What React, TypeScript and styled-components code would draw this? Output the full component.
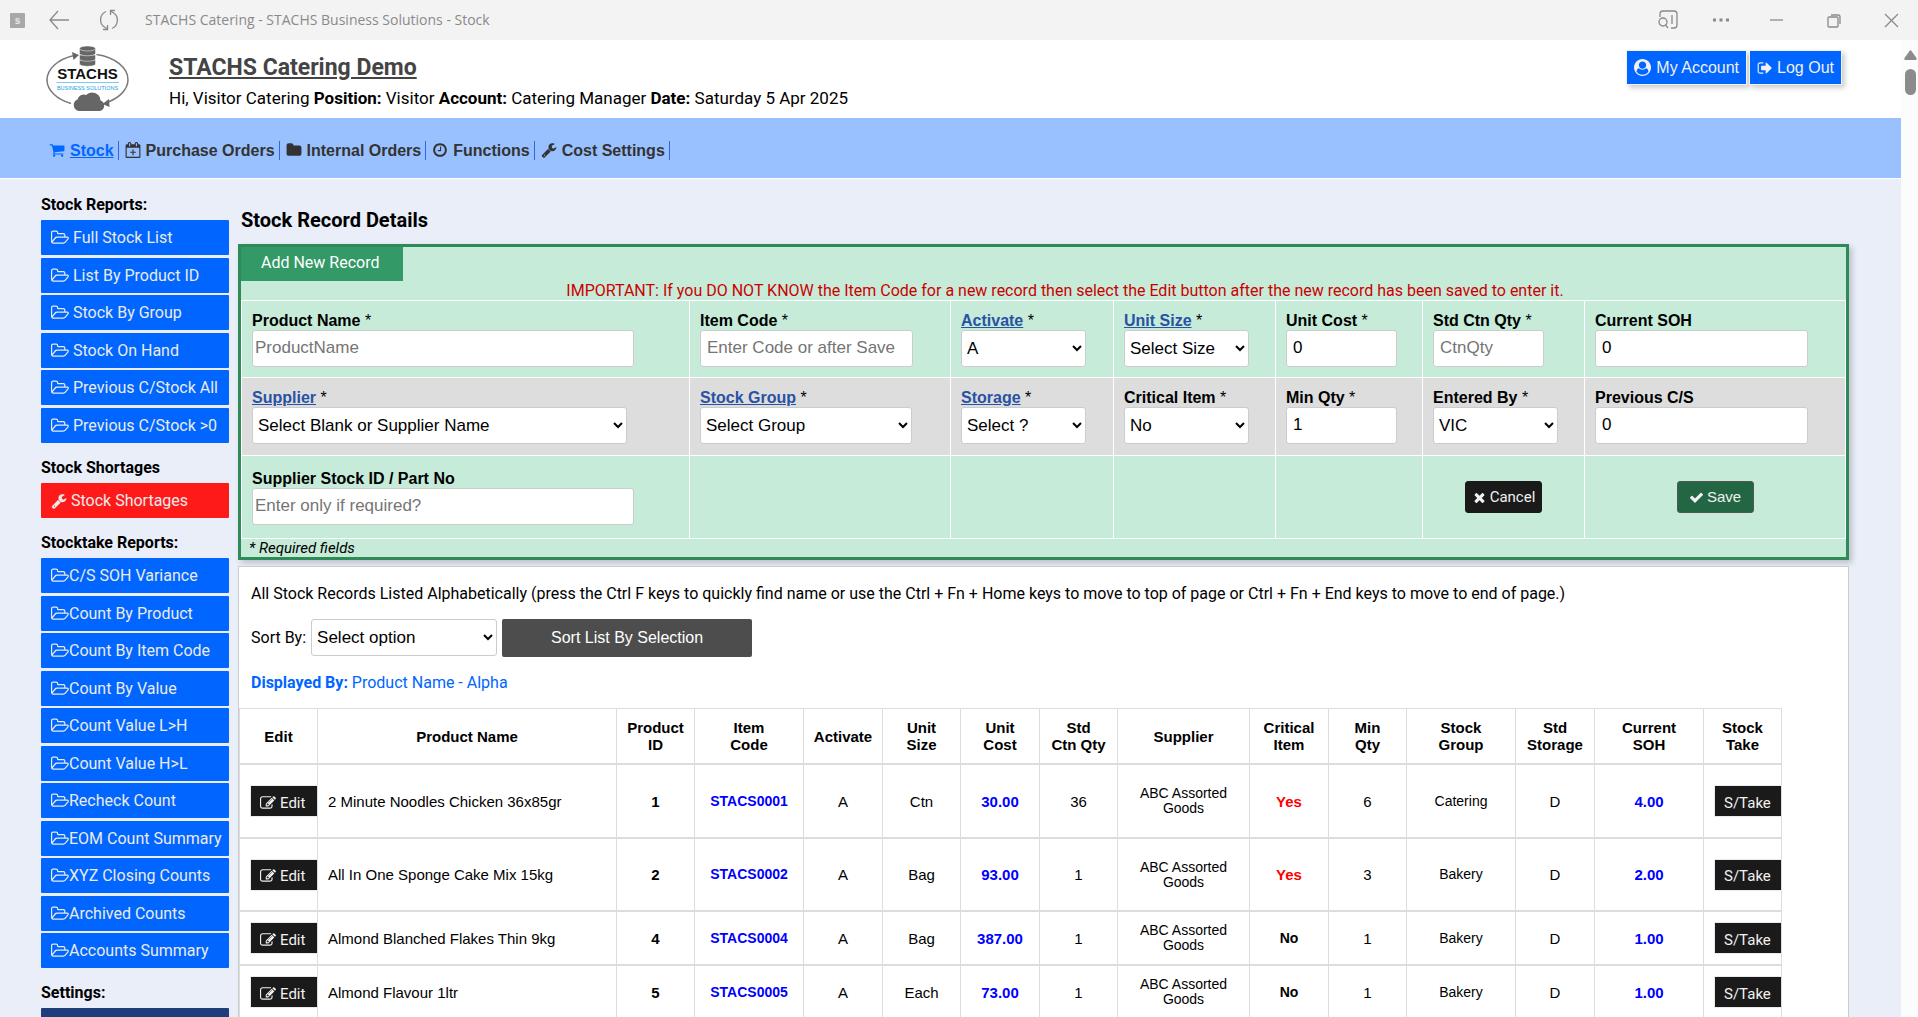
import React from "react";
import styled, { createGlobalStyle } from "styled-components";

const roboto = `Roboto, "Noto Sans", sans-serif`;
const arial = `"Liberation Sans", Arial, sans-serif`;

const GlobalStyle = createGlobalStyle`
  *, *::before, *::after { box-sizing: border-box; }
  body { margin: 0; background: #eaeef9; color: #000; font: 400 16px/24px ${roboto}; }
  h1, h2, h3, p, ul { margin: 0; padding: 0; }
  ul { list-style: none; }
  button, input, select { font-family: inherit; margin: 0; }
`;

/* ---------- icons ---------- */

const glyphs = {
  cart: { w: 1792, d: "M704 1536q0 52-38 90t-90 38-90-38-38-90 38-90 90-38 90 38 38 90zm896 0q0 52-38 90t-90 38-90-38-38-90 38-90 90-38 90 38 38 90zm128-1088v512q0 24-16.5 42.5t-40.5 21.5l-1044 122q13 60 13 70 0 16-24 64h920q26 0 45 19t19 45-19 45-45 19h-1024q-26 0-45-19t-19-45q0-11 8-31.5t16-36 21.5-40 15.5-29.5l-177-823h-204q-26 0-45-19t-19-45 19-45 45-19h256q16 0 28.5 6.5t19.5 15.5 13 24.5 8 26 5.5 29.5 4.5 26h1201q26 0 45 19t19 45z" },
  calendar: { w: 1792, d: "M192 1664h1408v-1024h-1408v1024zm384-1216v-288q0-14-9-23t-23-9h-64q-14 0-23 9t-9 23v288q0 14 9 23t23 9h64q14 0 23-9t9-23zm768 0v-288q0-14-9-23t-23-9h-64q-14 0-23 9t-9 23v288q0 14 9 23t23 9h64q14 0 23-9t9-23zm384-64v1280q0 52-38 90t-90 38h-1408q-52 0-90-38t-38-90v-1280q0-52 38-90t90-38h128v-96q0-66 47-113t113-47h64q66 0 113 47t47 113v96h384v-96q0-66 47-113t113-47h64q66 0 113 47t47 113v96h128q52 0 90 38t38 90zM832 832h128v256h256v128h-256v256h-128v-256h-256v-128h256z" },
  folder: { w: 1792, d: "M1728 608v704q0 92-66 158t-158 66h-1216q-92 0-158-66t-66-158v-960q0-92 66-158t158-66h320q92 0 158 66t66 158v32h672q92 0 158 66t66 158z" },
  folderOpen: { w: 1920, d: "M1783 952q0-31-31-31h-1088q-40 0-85.500 21.500t-71.500 52.500l-294 363q-18 24-18 40 0 31 31 31h1088q40 0 86-22t71-53l294-363q18-22 18-39zm-1143-159h768v-160q0-40-28-68t-68-28h-576q-40 0-68-28t-28-68v-64q0-40-28-68t-68-28h-320q-40 0-68 28t-28 68v853l256-315q44-53 116-87.500t140-34.500zm1269 159q0 62-46 120l-295 363q-43 53-116 87.500t-140 34.500h-1088q-92 0-158-66t-66-158v-960q0-92 66-158t158-66h320q92 0 158 66t66 158v32h544q92 0 158 66t66 158v160h192q54 0 99 24.500t67 70.500q15 32 15 68z" },
  clock: { w: 1792, d: "M1024 544v448q0 14-9 23t-23 9h-320q-14 0-23-9t-9-23v-64q0-14 9-23t23-9h224v-352q0-14 9-23t23-9h64q14 0 23 9t9 23zm416 352q0-148-73-273t-198-198-273-73-273 73-198 198-73 273 73 273 198 198 273 73 273-73 198-198 73-273zm224 0q0 209-103 385.500t-279.500 279.500-385.500 103-385.500-103-279.500-279.500-103-385.500 103-385.500 279.500-279.500 385.500-103 385.500 103 279.500 279.500 103 385.500z" },
  wrench: { w: 1792, d: "M448 1472q0-26-19-45t-45-19-45 19-19 45 19 45 45 19 45-19 19-45zm644-420l-682 682q-37 37-90 37-52 0-91-37l-106-108q-38-36-38-90 0-53 38-91l681-681q39 98 114.500 173.500t173.500 114.500zm634-435q0 39-23 106-47 134-164.500 217.500t-258.500 83.500q-185 0-316.500-131.500t-131.500-316.500 131.500-316.500 316.500-131.500q58 0 121.500 16.500t107.500 46.500q16 11 16 28t-16 28l-293 169v224l193 107q5-3 79-48.500t135.500-81 70.500-35.500q15 0 23.500 10t8.500 25z" },
  user: { w: 1792, d: "M1523 1339q-22-155-87.500-257.500t-184.500-118.500q-67 74-159.500 115.500t-195.500 41.500-195.500-41.500-159.500-115.500q-119 16-184.500 118.500t-87.500 257.500q106 150 271 237.500t356 87.500 356-87.500 271-237.500zm-243-699q0-159-112.500-271.500t-271.500-112.500-271.500 112.500-112.500 271.500 112.500 271.500 271.500 112.500 271.500-112.500 112.500-271.500zm512 256q0 182-71 347.500t-190.500 286-285.500 191.500-349 71q-182 0-348-71t-286-191-191-286-71-348 71-348 191-286 286-191 348-71 348 71 286 191 191 286 71 348z" },
  signOut: { w: 1664, d: "M704 1440q0 4 1 20t.5 26.500-3 23.500-10 19.500-20.500 6.500h-320q-119 0-203.500-84.500t-84.500-203.500v-704q0-119 84.500-203.500t203.500-84.500h320q13 0 22.500 9.500t9.500 22.500q0 4 1 20t.5 26.500-3 23.500-10 19.500-20.500 6.500h-320q-66 0-113 47t-47 113v704q0 66 47 113t113 47h312l11.500 1 11.500 3 8 5.500 7 9 2 13.500zm928-544q0 26-19 45l-544 544q-19 19-45 19t-45-19-19-45v-288h-448q-26 0-45-19t-19-45v-384q0-26 19-45t45-19h448v-288q0-26 19-45t45-19 45 19l544 544q19 19 19 45z" },
  edit: { w: 1792, d: "M888 1184l116-116-152-152-116 116v56h96v96h56zm440-720q-16-16-33 1l-350 350q-17 17-1 33t33-1l350-350q17-17 1-33zm80 594v190q0 119-84.500 203.500t-203.500 84.500h-832q-119 0-203.500-84.500t-84.500-203.500v-832q0-119 84.500-203.500t203.500-84.500h832q63 0 117 25 15 7 18 23 3 17-9 29l-49 49q-14 14-32 8-23-6-45-6h-832q-66 0-113 47t-47 113v832q0 66 47 113t113 47h832q66 0 113-47t47-113v-126q0-13 9-22l64-64q15-15 35-7t20 29zm-96-738l288 288-672 672h-288v-288zm444 132l-92 92-288-288 92-92q28-28 68-28t68 28l152 152q28 28 28 68t-28 68z" },
  times: { w: 1792, d: "M1490 1322q0 40-28 68l-136 136q-28 28-68 28t-68-28l-294-294-294 294q-28 28-68 28t-68-28l-136-136q-28-28-28-68t28-68l294-294-294-294q-28-28-28-68t28-68l136-136q28-28 68-28t68 28l294 294 294-294q28-28 68-28t68 28l136 136q28 28 28 68t-28 68l-294 294 294 294q28 28 28 68z" },
  check: { w: 1792, d: "M1671 566q0 40-28 68l-724 724-136 136q-28 28-68 28t-68-28l-136-136-362-362q-28-28-28-68t28-68l136-136q28-28 68-28t68 28l294 295 656-657q28-28 68-28t68 28l136 136q28 28 28 68z" },
};

type GlyphName = keyof typeof glyphs;

const GlyphSvg = styled.svg`
  flex: none;
  display: block;
  fill: currentColor;
  overflow: visible;
`;

function Glyph({ name, size = 16 }: { name: GlyphName; size?: number }) {
  const g = glyphs[name];
  return (
    <GlyphSvg viewBox={`0 0 ${g.w} 1792`} height={size} width={Math.round((size * g.w) / 1792)} aria-hidden>
      <path d={g.d} />
    </GlyphSvg>
  );
}

/* ---------- window frame ---------- */

const Shell = styled.div`
  display: flex;
  flex-direction: column;
  height: 100vh;
  overflow: hidden;
`;

const TitleBar = styled.div`
  flex: none;
  display: flex;
  align-items: center;
  height: 40px;
  padding: 0 16px 0 10px;
  background: #f3f3f3;
  color: #8a8a8a;
`;

const Favicon = styled.span`
  width: 15px;
  height: 15px;
  margin-right: 23px;
  border-radius: 1px;
  background: #a8a8a8;
  color: #e8e8e8;
  font: 700 10px/15px ${arial};
  text-align: center;
`;

const FrameButton = styled.button<{ $after: number }>`
  display: flex;
  align-items: center;
  justify-content: center;
  width: 22px;
  height: 24px;
  margin-right: ${(p) => p.$after}px;
  padding: 0;
  border: 0;
  background: none;
  color: inherit;
  svg {
    fill: none;
    stroke: currentColor;
    stroke-width: 1.3;
    overflow: visible;
  }
`;

const WindowTitle = styled.span`
  flex: 1;
  font: 400 14px/20px "Open Sans", "Noto Sans", sans-serif;
`;

const Viewport = styled.div`
  flex: 1;
  display: flex;
  min-height: 0;
`;

const Page = styled.div`
  flex: 1;
  min-width: 0;
  overflow: hidden;
  background: #eaeef9;
`;

const ScrollTrack = styled.div`
  flex: none;
  display: flex;
  flex-direction: column;
  align-items: center;
  width: 17px;
  padding: 10px 0 0 2px;
  background: #fcfcfc;
`;

const ScrollArrow = styled.svg`
  width: 13px;
  height: 10px;
  fill: #8b8b8b;
`;

const ScrollThumb = styled.div`
  width: 11px;
  height: 26px;
  margin-top: 9px;
  border-radius: 6px;
  background: #8b8b8b;
`;

/* ---------- page header and menu ---------- */

const Header = styled.header`
  display: flex;
  height: 78px;
  padding: 6px 59px 0 46px;
  background: #fff;
`;

const LogoSvg = styled.svg`
  flex: none;
  width: 83px;
  height: 66px;
  margin-right: 40px;
`;

const Greeting = styled.div`
  flex: 1;
  padding-top: 8px;
  font-size: 17px;
  line-height: 24px;
`;

const SiteTitle = styled.h1`
  margin-bottom: 4px;
  color: #444;
  font-size: 23px;
  font-weight: 700;
  line-height: 28px;
  text-decoration: underline;
`;

const AccountActions = styled.div`
  display: flex;
  align-items: flex-start;
  gap: 2px;
  padding-top: 4px;
`;

const AccountLink = styled.a`
  display: flex;
  align-items: center;
  gap: 5px;
  padding: 6px 7px;
  border: 1px solid #f1f1f1;
  background: #06f;
  box-shadow: 3px 3px 5px rgba(0, 0, 0, 0.2);
  color: #f1f1f1;
  font: 400 16px/21px ${arial};
  text-decoration: none;
`;

const Menu = styled.nav`
  display: flex;
  align-items: center;
  height: 61px;
  padding: 4px 0 0 49px;
  border-bottom: 1px solid #fff;
  background: #99c1ff;
`;

const MenuLink = styled.a<{ $active?: boolean }>`
  display: flex;
  align-items: center;
  gap: 5px;
  margin-right: 6px;
  padding-right: 4px;
  border-right: 1px solid #36d;
  color: ${(p) => (p.$active ? "#06f" : "#333")};
  font: 700 16px/19px ${arial};
  text-decoration: ${(p) => (p.$active ? "underline" : "none")};
`;

/* ---------- sidebar ---------- */

const Columns = styled.div`
  display: flex;
  align-items: flex-start;
  padding: 0 52px 0 41px;
`;

const Sidebar = styled.aside`
  flex: none;
  width: 188px;
  margin-right: 9px;
  padding-top: 1px;
`;

const SideHeading = styled.h3`
  padding: 13px 0 3px;
  font-size: 16px;
  font-weight: 700;
  line-height: 24px;
`;

const SideItem = styled.li`
  &:nth-child(odd):not(:last-child) { margin-bottom: 3px; }
  &:nth-child(even):not(:last-child) { margin-bottom: 2px; }
`;

const SideLink = styled.a<{ $tone: string; $tight?: boolean }>`
  display: flex;
  align-items: center;
  gap: ${(p) => (p.$tight ? 0 : 4)}px;
  height: 35px;
  padding-left: 10px;
  border-radius: 1px;
  background: ${(p) => p.$tone};
  color: #ebebeb;
  white-space: nowrap;
  text-decoration: none;
`;

/* ---------- new record form ---------- */

const Main = styled.main`
  flex: 1;
  min-width: 0;
  padding-top: 29px;
`;

const PageHeading = styled.h2`
  margin-bottom: 12px;
  padding-left: 3px;
  font-size: 20px;
  font-weight: 700;
  line-height: 24px;
`;

const RecordForm = styled.form`
  border: 3px solid #2e8b57;
  background: #c6ebd9;
  box-shadow: 3px 3px 6px rgba(0, 0, 0, 0.2);
`;

const FormTab = styled.div`
  width: max-content;
  padding: 6px 24px 9px 20px;
  background: #396;
  color: #fff;
  line-height: 19px;
`;

const Warning = styled.p`
  padding-left: 43px;
  color: #c00;
  line-height: 19px;
  text-align: center;
`;

const FieldGrid = styled.div`
  display: grid;
  grid-template-columns: 447fr 260fr 162fr 161fr 146fr 161fr 260fr;
  gap: 1px;
  padding: 1px;
  background: #fff;
`;

const FieldCell = styled.div<{ $shaded?: boolean; $last?: boolean; $center?: boolean }>`
  display: flex;
  flex-direction: column;
  justify-content: ${(p) => (p.$shaded ? "flex-start" : "center")};
  align-items: ${(p) => (p.$center ? "center" : "flex-start")};
  min-width: 0;
  min-height: ${(p) => (p.$last ? 82 : p.$shaded ? 77 : 76)}px;
  padding: 10px;
  background: ${(p) => (p.$shaded ? "#ddd" : "#c6ebd9")};
`;

const FieldLabel = styled.label`
  font: 700 16px/19px ${arial};
  white-space: nowrap;
  span { font-weight: 400; }
`;

const FieldLink = styled.a`
  color: #2952a3;
`;

const TextBox = styled.input<{ $w: number; $flush?: boolean }>`
  width: ${(p) => p.$w}px;
  height: 37px;
  padding: 0 ${(p) => (p.$flush ? 2 : 6)}px 2px;
  border: 1px solid #ccc;
  border-radius: 3px;
  background: #fff;
  color: #000;
  font: 400 17px/20px ${arial};
  &::placeholder { color: #757575; }
`;

const Dropdown = styled.select<{ $w: number }>`
  width: ${(p) => p.$w}px;
  height: 37px;
  padding: 0 0 0 1px;
  border: 1px solid #ccc;
  border-radius: 3px;
  background: #fff;
  color: #000;
  font: 400 17px/20px ${arial};
`;

const FormButton = styled.button<{ $tone: string; $edge: string; $sans?: boolean }>`
  display: flex;
  align-items: center;
  justify-content: center;
  gap: 3px;
  width: 77px;
  height: 32px;
  padding: 0;
  border: 1px solid ${(p) => p.$edge};
  border-radius: 3px;
  background: ${(p) => p.$tone};
  color: #f1f1f1;
  font: 400 15px/18px ${(p) => (p.$sans ? arial : roboto)};
`;

const RequiredNote = styled.p`
  padding-left: 8px;
  font-size: 15px;
  font-style: italic;
  line-height: 18px;
`;

/* ---------- stock list ---------- */

const ListPanel = styled.section`
  margin-top: 6px;
  border: 1px solid #ccc;
  background: #fff;
`;

const ListTools = styled.div`
  display: flex;
  flex-direction: column;
  gap: 14px;
  padding: 15px 12px 14px;
  line-height: 23px;
`;

const SortRow = styled.div`
  display: flex;
  align-items: flex-start;
  gap: 5px;
  label { line-height: 37px; }
`;

const SortButton = styled.button`
  width: 250px;
  height: 38px;
  border: 0;
  border-radius: 2px;
  background: #4d4d4d;
  color: #fff;
  font: 400 16px/20px ${arial};
`;

const SortState = styled.p`
  color: #06f;
`;

const StockTable = styled.table`
  table-layout: fixed;
  width: 1543px;
  border: 0 solid #ddd;
  border-width: 1px 0 0 1px;
  border-spacing: 0;
  font-family: ${arial};
  font-size: 15px;
  line-height: 17px;
  text-align: center;
`;

const HeadCell = styled.th`
  height: 56px;
  padding: 0;
  border: 0 solid #ddd;
  border-width: 0 1px 2px 0;
  font-weight: 700;
`;

const Cell = styled.td<{ $kind?: string }>`
  padding: 0 ${(p) => (p.$kind === "name" || p.$kind === "button" ? "0 0 10px" : "0")};
  border: 0 solid #ddd;
  border-width: 0 1px 2px 0;
  overflow: hidden;
  white-space: nowrap;
  text-align: ${(p) => (p.$kind === "name" || p.$kind === "button" ? "left" : "center")};
  color: ${(p) => (p.$kind === "money" || p.$kind === "code" ? "#00f" : p.$kind === "alert" ? "#f00" : "#000")};
  font-weight: ${(p) => (["money", "code", "alert", "strong", "plain"].includes(p.$kind ?? "") ? 700 : 400)};
  font-size: ${(p) => (["code", "plain", "small"].includes(p.$kind ?? "") ? 14 : 15)}px;
  line-height: ${(p) => (p.$kind === "small" ? 15 : 17)}px;
`;

const RowButton = styled.button`
  display: flex;
  align-items: center;
  gap: 4px;
  min-width: 68px;
  height: 32px;
  padding: 3px 9px 0;
  border: 1px solid #ebebeb;
  background: #1a1a1a;
  color: #f1f1f1;
  font: 400 15px/18px ${roboto};
`;

/* ---------- data ---------- */

const reports = ["Full Stock List", "List By Product ID", "Stock By Group", "Stock On Hand", "Previous C/Stock All", "Previous C/Stock >0"];
const stocktake = [
  "C/S SOH Variance", "Count By Product", "Count By Item Code", "Count By Value", "Count Value L>H", "Count Value H>L",
  "Recheck Count", "EOM Count Summary", "XYZ Closing Counts", "Archived Counts", "Accounts Summary",
];

const menu: { icon: GlyphName; text: string; active?: boolean }[] = [
  { icon: "cart", text: "Stock", active: true },
  { icon: "calendar", text: "Purchase Orders" },
  { icon: "folder", text: "Internal Orders" },
  { icon: "clock", text: "Functions" },
  { icon: "wrench", text: "Cost Settings" },
];

type Field = {
  id: string;
  label: string;
  w: number;
  required?: boolean;
  link?: boolean;
  flush?: boolean;
  placeholder?: string;
  value?: string;
  option?: string;
};

const rowOne: Field[] = [
  { id: "productName", label: "Product Name", w: 382, required: true, placeholder: "ProductName", flush: true },
  { id: "itemCode", label: "Item Code", w: 213, required: true, placeholder: "Enter Code or after Save" },
  { id: "activate", label: "Activate", w: 125, required: true, link: true, option: "A" },
  { id: "unitSize", label: "Unit Size", w: 125, required: true, link: true, option: "Select Size" },
  { id: "unitCost", label: "Unit Cost", w: 111, required: true, value: "0" },
  { id: "ctnQty", label: "Std Ctn Qty", w: 111, required: true, placeholder: "CtnQty" },
  { id: "currentSoh", label: "Current SOH", w: 213, value: "0" },
];

const rowTwo: Field[] = [
  { id: "supplier", label: "Supplier", w: 375, required: true, link: true, option: "Select Blank or Supplier Name" },
  { id: "stockGroup", label: "Stock Group", w: 212, required: true, link: true, option: "Select Group" },
  { id: "storage", label: "Storage", w: 125, required: true, link: true, option: "Select ?" },
  { id: "critical", label: "Critical Item", w: 125, required: true, option: "No" },
  { id: "minQty", label: "Min Qty", w: 111, required: true, value: "1" },
  { id: "enteredBy", label: "Entered By", w: 125, required: true, option: "VIC" },
  { id: "previousCs", label: "Previous C/S", w: 213, value: "0" },
];

const partNo: Field = { id: "partNo", label: "Supplier Stock ID / Part No", w: 382, placeholder: "Enter only if required?", flush: true };

const columns: [string[], number][] = [
  [["Edit"], 78], [["Product Name"], 299], [["Product", "ID"], 78], [["Item", "Code"], 109], [["Activate"], 79],
  [["Unit", "Size"], 78], [["Unit", "Cost"], 79], [["Std", "Ctn Qty"], 78], [["Supplier"], 132], [["Critical", "Item"], 79],
  [["Min", "Qty"], 78], [["Stock", "Group"], 109], [["Std", "Storage"], 79], [["Current", "SOH"], 109], [["Stock", "Take"], 78],
];

const stock = [
  { height: 74, name: "2 Minute Noodles Chicken 36x85gr", id: 1, unit: "Ctn", cost: "30.00", qty: 36, critical: "Yes", min: 6, group: "Catering", soh: "4.00" },
  { height: 73, name: "All In One Sponge Cake Mix 15kg", id: 2, unit: "Bag", cost: "93.00", qty: 1, critical: "Yes", min: 3, group: "Bakery", soh: "2.00" },
  { height: 54, name: "Almond Blanched Flakes Thin 9kg", id: 4, unit: "Bag", cost: "387.00", qty: 1, critical: "No", min: 1, group: "Bakery", soh: "1.00" },
  { height: 54, name: "Almond Flavour 1ltr", id: 5, unit: "Each", cost: "73.00", qty: 1, critical: "No", min: 1, group: "Bakery", soh: "1.00" },
];

const StockRow = styled.tr<{ $height: number }>`
  height: ${(p) => p.$height}px;
`;

/* ---------- parts ---------- */

function Lines({ of }: { of: string[] }) {
  return (
    <>
      {of.map((t, i) => (
        <React.Fragment key={t}>
          {i > 0 && <br />}
          {t}
        </React.Fragment>
      ))}
    </>
  );
}

function FieldContent({ f }: { f: Field }) {
  return (
    <>
      <FieldLabel htmlFor={f.id}>
        {f.link ? <FieldLink href="#">{f.label}</FieldLink> : f.label}
        {f.required && <span> *</span>}
      </FieldLabel>
      {f.option ? (
        <Dropdown id={f.id} $w={f.w}>
          <option>{f.option}</option>
        </Dropdown>
      ) : (
        <TextBox id={f.id} type="text" $w={f.w} $flush={f.flush} placeholder={f.placeholder} defaultValue={f.value} />
      )}
    </>
  );
}

function Logo() {
  return (
    <LogoSvg viewBox="0 0 166 132" role="img" aria-label="STACHS Business Solutions">
      <g fill="none" stroke="#7a7a7a">
        <path d="M50 115A81 52 0 0 1 2 68A81 52 0 0 1 56 19" strokeWidth="3" />
        <path d="M101 17A81 52 0 0 1 164 68A81 52 0 0 1 118 114" strokeWidth="3" />
      </g>
      <path d="M52 12l14 6-11 10zM126 106l-13 10 14 6z" fill="#666" />
      <g fill="#666" stroke="#fff" strokeWidth="1">
        <path d="M67 28v8c0 6 32 6 32 0v-8z" />
        <path d="M67 18v8c0 6 32 6 32 0v-8z" />
        <path d="M67 5v10c0 6 32 6 32 0v-10z" />
        <ellipse cx="83" cy="5" rx="16" ry="5" />
      </g>
      <path d="M66 130a12 12 0 0 1-3-23 13 13 0 0 1 17-9 17 17 0 0 1 29 11 11 11 0 0 1-1 21z" fill="#666" />
      <text x="83" y="66" textAnchor="middle" fontFamily="Liberation Sans, Arial, sans-serif" fontWeight="700" fontSize="30" fill="#111">STACHS</text>
      <path d="M21 73H146" stroke="#7cc8ee" strokeWidth="2" />
      <text x="83" y="87" textAnchor="middle" fontFamily="Liberation Sans, Arial, sans-serif" fontSize="11" fill="#1a9fe0">BUSINESS SOLUTIONS</text>
    </LogoSvg>
  );
}

function Frame() {
  return (
    <TitleBar>
      <Favicon>s</Favicon>
      <FrameButton $after={28} aria-label="Back">
        <svg width="20" height="18"><path d="M20 9H1M9 0L1 9l8 9" /></svg>
      </FrameButton>
      <FrameButton $after={25} aria-label="Refresh">
        <svg width="20" height="22">
          <path d="M7 2.500A9 9 0 0 0 6 18.500L8 19.500M13 19.500A9 9 0 0 0 14 3.500L12 2.500M8.500 16v4.500H4M11.500 6V1.500H16" />
        </svg>
      </FrameButton>
      <WindowTitle>STACHS Catering - STACHS Business Solutions - Stock</WindowTitle>
      <FrameButton $after={31} aria-label="Search in sidebar">
        <svg width="20" height="20">
          <path d="M2 7V4a3 3 0 0 1 3-3h11a3 3 0 0 1 3 3v11a3 3 0 0 1-3 3h-3M14 5v9M10 18l-3-3.500" />
          <circle cx="5" cy="12" r="4" />
        </svg>
      </FrameButton>
      <FrameButton $after={33} aria-label="More">
        <svg width="18" height="4"><path d="M1 2h3M7.500 2h3M14 2h3" strokeWidth="3" /></svg>
      </FrameButton>
      <FrameButton $after={35} aria-label="Minimise">
        <svg width="13" height="2"><path d="M0 1h13" /></svg>
      </FrameButton>
      <FrameButton $after={36} aria-label="Restore">
        <svg width="13" height="13"><rect x="1" y="3" width="10" height="10" rx="1" /><path d="M4 1h7a2 2 0 0 1 2 2v7" /></svg>
      </FrameButton>
      <FrameButton $after={0} aria-label="Close">
        <svg width="13" height="13"><path d="M0 0l13 13M13 0L0 13" /></svg>
      </FrameButton>
    </TitleBar>
  );
}

export default function App() {
  return (
    <Shell>
      <GlobalStyle />
      <Frame />
      <Viewport>
        <Page>
          <Header>
            <Logo />
            <Greeting>
              <SiteTitle>STACHS Catering Demo</SiteTitle>
              <p>
                Hi, Visitor Catering <b>Position:</b> Visitor <b>Account:</b> Catering Manager <b>Date:</b> Saturday 5 Apr 2025
              </p>
            </Greeting>
            <AccountActions>
              <AccountLink href="#"><Glyph name="user" size={17} /> My Account</AccountLink>
              <AccountLink href="#"><Glyph name="signOut" /> Log Out</AccountLink>
            </AccountActions>
          </Header>
          <Menu>
            {menu.map((m) => (
              <MenuLink key={m.text} href="#" $active={m.active}>
                <Glyph name={m.icon} />
                {m.text}
              </MenuLink>
            ))}
          </Menu>
          <Columns>
            <Sidebar>
              <SideHeading>Stock Reports:</SideHeading>
              <ul>
                {reports.map((t) => (
                  <SideItem key={t}><SideLink href="#" $tone="#06f"><Glyph name="folderOpen" size={17} />{t}</SideLink></SideItem>
                ))}
              </ul>
              <SideHeading>Stock Shortages</SideHeading>
              <SideLink href="#" $tone="#ff1a1a"><Glyph name="wrench" />Stock Shortages</SideLink>
              <SideHeading>Stocktake Reports:</SideHeading>
              <ul>
                {stocktake.map((t) => (
                  <SideItem key={t}><SideLink href="#" $tone="#06f" $tight><Glyph name="folderOpen" size={17} />{t}</SideLink></SideItem>
                ))}
              </ul>
              <SideHeading>Settings:</SideHeading>
              <SideLink href="#" $tone="#1f3d7a" aria-label="Settings" />
            </Sidebar>
            <Main>
              <PageHeading>Stock Record Details</PageHeading>
              <RecordForm>
                <FormTab>Add New Record</FormTab>
                <Warning>
                  IMPORTANT: If you DO NOT KNOW the Item Code for a new record then select the Edit button after the new record has been saved to enter it.
                </Warning>
                <FieldGrid>
                  {rowOne.map((f) => <FieldCell key={f.id}><FieldContent f={f} /></FieldCell>)}
                  {rowTwo.map((f) => <FieldCell key={f.id} $shaded><FieldContent f={f} /></FieldCell>)}
                  <FieldCell $last><FieldContent f={partNo} /></FieldCell>
                  <FieldCell $last />
                  <FieldCell $last />
                  <FieldCell $last />
                  <FieldCell $last />
                  <FieldCell $last $center>
                    <FormButton type="button" $tone="#1a1a1a" $edge="#1a1a1a"><Glyph name="times" size={15} />Cancel</FormButton>
                  </FieldCell>
                  <FieldCell $last $center>
                    <FormButton type="button" $tone="#264" $edge="#555" $sans><Glyph name="check" size={15} />Save</FormButton>
                  </FieldCell>
                </FieldGrid>
                <RequiredNote>* Required fields</RequiredNote>
              </RecordForm>
              <ListPanel>
                <ListTools>
                  <p>
                    All Stock Records Listed Alphabetically (press the Ctrl F keys to quickly find name or use the Ctrl + Fn + Home keys to move to top of page or Ctrl + Fn + End keys to move to end of page.)
                  </p>
                  <SortRow>
                    <label htmlFor="sortBy">Sort By:</label>
                    <Dropdown id="sortBy" $w={186}><option>Select option</option></Dropdown>
                    <SortButton type="button">Sort List By Selection</SortButton>
                  </SortRow>
                  <SortState><b>Displayed By:</b> Product Name - Alpha</SortState>
                </ListTools>
                <StockTable>
                  <colgroup>{columns.map(([h, w]) => <col key={h.join()} width={w} />)}</colgroup>
                  <thead>
                    <tr>{columns.map(([h]) => <HeadCell key={h.join()}><Lines of={h} /></HeadCell>)}</tr>
                  </thead>
                  <tbody>
                    {stock.map((s) => (
                      <StockRow key={s.id} $height={s.height}>
                        <Cell $kind="button"><RowButton type="button"><Glyph name="edit" size={16} />Edit</RowButton></Cell>
                        <Cell $kind="name">{s.name}</Cell>
                        <Cell $kind="strong">{s.id}</Cell>
                        <Cell $kind="code">{`STACS000${s.id}`}</Cell>
                        <Cell>A</Cell>
                        <Cell>{s.unit}</Cell>
                        <Cell $kind="money">{s.cost}</Cell>
                        <Cell>{s.qty}</Cell>
                        <Cell $kind="small"><Lines of={["ABC Assorted", "Goods"]} /></Cell>
                        <Cell $kind={s.critical === "Yes" ? "alert" : "plain"}>{s.critical}</Cell>
                        <Cell>{s.min}</Cell>
                        <Cell $kind="small">{s.group}</Cell>
                        <Cell>D</Cell>
                        <Cell $kind="money">{s.soh}</Cell>
                        <Cell $kind="button"><RowButton type="button">S/Take</RowButton></Cell>
                      </StockRow>
                    ))}
                  </tbody>
                </StockTable>
              </ListPanel>
            </Main>
          </Columns>
        </Page>
        <ScrollTrack>
          <ScrollArrow viewBox="0 0 13 10"><path d="M5.500 1q1-1.300 2 0L12.500 8q.7 2-1 2h-10q-1.700 0-1-2z" /></ScrollArrow>
          <ScrollThumb />
        </ScrollTrack>
      </Viewport>
    </Shell>
  );
}
